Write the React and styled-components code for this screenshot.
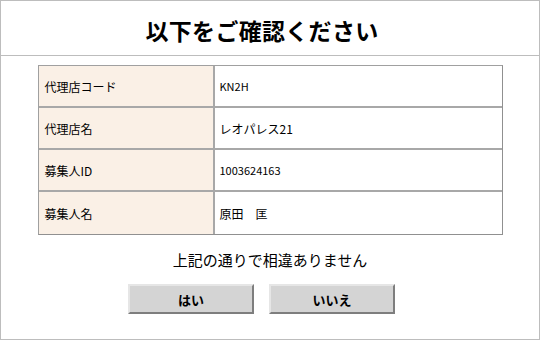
import React from 'react';
import styled, { createGlobalStyle } from 'styled-components';

const GlobalStyle = createGlobalStyle`
    body {
        margin: 0;
        background: #fff;
        font-family: "Noto Sans CJK JP", "Liberation Sans", sans-serif;
        color: #000;
    }
`;

const Frame = styled.div`
    width: 540px;
    height: 340px;
    box-sizing: border-box;
    border: 1px solid #bdbdbd;
    display: flex;
    flex-direction: column;
    align-items: center;
`;

const Header = styled.header`
    align-self: stretch;
    height: 55px;
    border-bottom: 1px solid #bdbdbd;
    display: flex;
    align-items: center;
    justify-content: center;
    padding: 4px 16px 0 0;
    box-sizing: border-box;
`;

const Title = styled.h1`
    margin: 0;
    font-size: 23px;
    font-weight: bold;
    letter-spacing: 0.3px;
`;

const Table = styled.table`
    margin-top: 9px;
    width: 465px;
    border-collapse: separate;
    border-spacing: 0;
    border-top: 1px solid #a0a0a0;
    border-left: 1px solid #a0a0a0;
    border-right: 1px solid #909090;
    border-bottom: 1px solid #909090;
`;

const Row = styled.tr`
    height: 42px;
`;

const Cell = styled.td`
    padding: 0 0 0 ${p => (p.$label ? '6px' : '5px')};
    font-size: ${p => (p.$small ? '11px' : '12px')};
    background: ${p => (p.$label ? '#faf0e6' : '#fff')};
    width: ${p => (p.$label ? '168px' : 'auto')};
    border-bottom: ${p => (p.$last ? 'none' : '2px solid #a8a8a8')};
    border-right: ${p => (p.$label ? '2px solid #a8a8a8' : 'none')};
`;

const Message = styled.p`
    margin: 14px 0 0;
    font-size: 15px;
`;

const Buttons = styled.div`
    display: flex;
    gap: 15px;
    margin-top: 14px;
    padding-right: 17px;
`;

const Button = styled.button`
    width: 126px;
    height: 30px;
    box-sizing: border-box;
    background: #d4d4d4;
    border-top: 2px solid #e6e6e6;
    border-left: 2px solid #e6e6e6;
    border-right: 2px solid #7e7e7e;
    border-bottom: 2px solid #7e7e7e;
    font-family: "Noto Sans CJK JP", sans-serif;
    font-size: 13px;
    font-weight: bold;
    color: #000;
    padding: 0;
`;

const ROWS = [
    { label: '代理店コード', value: 'KN2H', small: true },
    { label: '代理店名', value: 'レオパレス21' },
    { label: '募集人ID', value: '1003624163', small: true },
    { label: '募集人名', value: '原田\u3000匡' }
];

export default function App() {
    return (
        <>
            <GlobalStyle />
            <Frame>
                <Header>
                    <Title>以下をご確認ください</Title>
                </Header>
                <Table>
                    <tbody>
                        {ROWS.map((r, i) => (
                            <Row key={r.label}>
                                <Cell $label $last={i === ROWS.length - 1}>{r.label}</Cell>
                                <Cell $small={r.small} $last={i === ROWS.length - 1}>{r.value}</Cell>
                            </Row>
                        ))}
                    </tbody>
                </Table>
                <Message>上記の通りで相違ありません</Message>
                <Buttons>
                    <Button>はい</Button>
                    <Button>いいえ</Button>
                </Buttons>
            </Frame>
        </>
    );
}
